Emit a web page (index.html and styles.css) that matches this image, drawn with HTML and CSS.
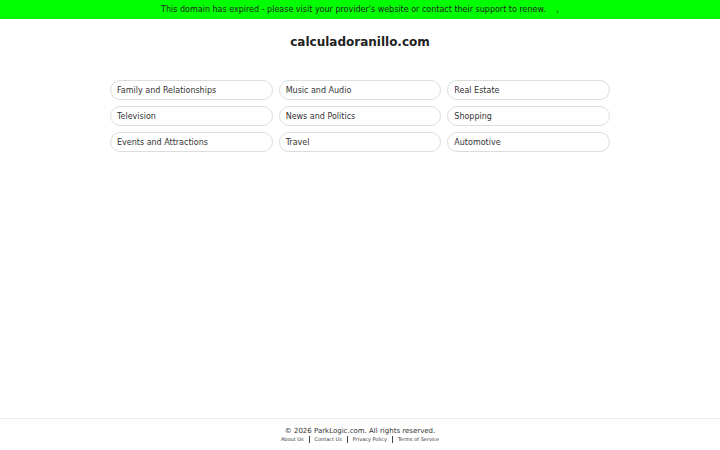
FILE: index.html
```html
<!DOCTYPE html>
<html lang="en">
<head>
    <meta charset="UTF-8">
    <meta name="viewport" content="width=device-width, initial-scale=1.0">
    <title>calculadoranillo.com</title>
    <link rel="stylesheet" href="styles.css">
</head>
<body>
    <div class="notice">
        This domain has expired - please visit your provider's website or contact their support to renew. <span class="notice-close">,</span>
    </div>
    <main class="content">
        <h1 class="domain">calculadoranillo.com</h1>
        <div class="links">
            <a href="#" class="link">Family and Relationships</a>
            <a href="#" class="link">Music and Audio</a>
            <a href="#" class="link">Real Estate</a>
            <a href="#" class="link">Television</a>
            <a href="#" class="link">News and Politics</a>
            <a href="#" class="link">Shopping</a>
            <a href="#" class="link">Events and Attractions</a>
            <a href="#" class="link">Travel</a>
            <a href="#" class="link">Automotive</a>
        </div>
    </main>
    <footer class="footer">
        <p class="copyright">&copy; 2026 ParkLogic.com. All rights reserved.</p>
        <ul class="footer-links">
            <li><a href="#">About Us</a></li>
            <li><a href="#">Contact Us</a></li>
            <li><a href="#">Privacy Policy</a></li>
            <li><a href="#">Terms of Service</a></li>
        </ul>
    </footer>
</body>
</html>
```

FILE: styles.css
```css
body {
    font-family: "DejaVu Sans", sans-serif;
    margin: 0;
    padding: 0;
    color: #222;
    background-color: #fff;
    min-height: 450px;
    display: flex;
    flex-direction: column;
}

.notice {
    background-color: #00ff00;
    color: #222;
    font-size: 8px;
    height: 19px;
    line-height: 20px;
    text-align: center;
}

.notice-close {
    margin-left: 8px;
}

.content {
    flex: 1;
    width: 500px;
    margin: 0 auto;
}

.domain {
    font-size: 12px;
    text-align: center;
    margin: 16px 0 31px 0;
    line-height: 14px;
}

.links {
    display: grid;
    grid-template-columns: repeat(3, 1fr);
    gap: 6px 6px;
}

.link {
    display: block;
    height: 18px;
    line-height: 19px;
    padding: 0 6px;
    border: 1px solid #ddd;
    border-radius: 10px;
    color: #333;
    text-decoration: none;
    font-size: 8px;
}

.footer {
    border-top: 1px solid #eee;
    height: 32px;
    text-align: center;
    box-sizing: border-box;
    padding-top: 8px;
}

.copyright {
    margin: 0;
    font-size: 7px;
    line-height: 9px;
    color: #333;
}

.footer-links {
    list-style: none;
    margin: 0;
    padding: 0;
    display: flex;
    justify-content: center;
    font-size: 5px;
    line-height: 7px;
}

.footer-links li + li {
    border-left: 1px solid #444;
    margin-left: 5px;
    padding-left: 5px;
}

.footer-links a {
    color: #333;
    text-decoration: none;
}
```
